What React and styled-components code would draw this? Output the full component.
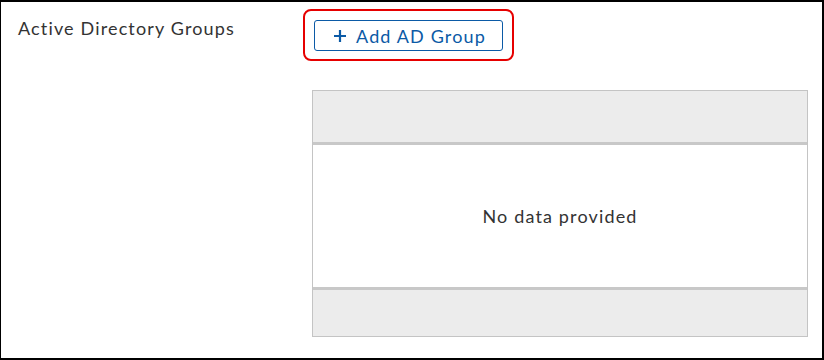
import React from "react";
import styled, { createGlobalStyle } from "styled-components";

const GlobalStyle = createGlobalStyle`
  html, body {
    margin: 0;
    padding: 0;
    background: #ffffff;
  }
  body {
    font-family: Lato, "Open Sans", sans-serif;
  }
`;

const Frame = styled.div`
  box-sizing: border-box;
  width: 824px;
  height: 360px;
  border: 2px solid #000000;
  border-left-width: 1px;
  display: grid;
  grid-template-columns: 299px 1fr;
  padding: 7px 0 0 17px;
`;

const Label = styled.div`
  font-size: 18px;
  letter-spacing: 1.15px;
  color: #333333;
  padding-top: 8px;
`;

const Content = styled.div`
  display: flex;
  flex-direction: column;
  align-items: flex-start;
`;

const Highlight = styled.div`
  box-sizing: border-box;
  border: 2px solid #e60000;
  border-radius: 8px;
  padding: 9px 9px 8px 9px;
  margin-left: -14px;
`;

const AddButton = styled.button`
  box-sizing: border-box;
  display: flex;
  align-items: center;
  gap: 10px;
  height: 31px;
  padding: 0 16px 0 19px;
  border: 1px solid #0b5aa6;
  border-radius: 3px;
  background: #ffffff;
  color: #0b5aa6;
  font-family: Lato, "Open Sans", sans-serif;
  font-size: 18px;
  letter-spacing: 1.15px;
  cursor: pointer;
`;

const Table = styled.div`
  box-sizing: border-box;
  margin-top: 29px;
  margin-left: -5px;
  width: 496px;
  border: 1px solid #c4c4c4;
  display: flex;
  flex-direction: column;
`;

const Band = styled.div`
  background: #ececec;
  height: ${p => p.$h}px;
`;

const Divider = styled.div`
  height: 3px;
  background: #c8c8c8;
`;

const Body = styled.div`
  height: 142px;
  background: #ffffff;
  display: flex;
  align-items: center;
  justify-content: center;
  font-size: 18px;
  letter-spacing: 1.15px;
  color: #333333;
`;

export default function App() {
  return (
    <>
      <GlobalStyle />
      <Frame>
        <Label>Active Directory Groups</Label>
        <Content>
          <Highlight>
            <AddButton>
              <svg width="12" height="12" viewBox="0 0 12 12">
                <path d="M6 0v12M0 6h12" stroke="#0b5aa6" strokeWidth="2.2" />
              </svg>
              Add AD Group
            </AddButton>
          </Highlight>
          <Table>
            <Band $h={51} />
            <Divider />
            <Body>No data provided</Body>
            <Divider />
            <Band $h={46} />
          </Table>
        </Content>
      </Frame>
    </>
  );
}
